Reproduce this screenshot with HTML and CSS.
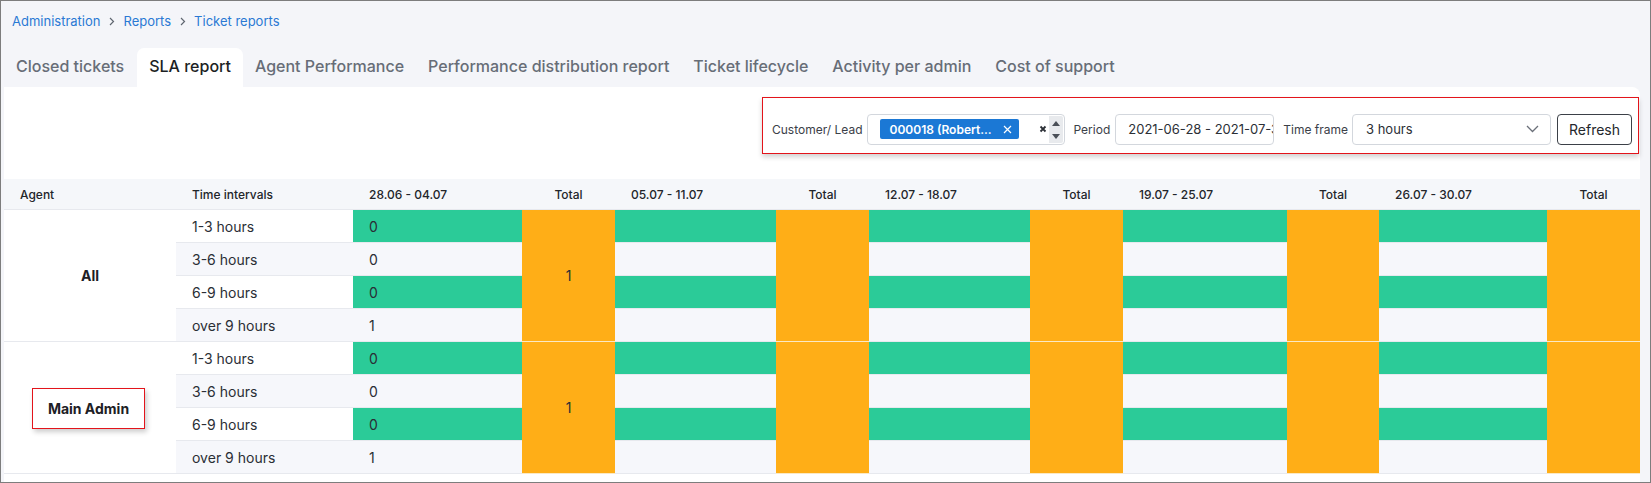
FILE: index.html
```html
<!DOCTYPE html>
<html lang="en">
<head>
<meta charset="utf-8">
<title>SLA report</title>
<link rel="stylesheet" href="styles.css">
</head>
<body>
<div class="frame">
  <nav class="crumbs">
    <a class="crumb">Administration</a>
    <svg class="sep" width="6" height="9" viewBox="0 0 6 9"><path d="M1 1l3.5 3.5L1 8" fill="none" stroke="#5f6670" stroke-width="1.2"/></svg>
    <a class="crumb">Reports</a>
    <svg class="sep" width="6" height="9" viewBox="0 0 6 9"><path d="M1 1l3.5 3.5L1 8" fill="none" stroke="#5f6670" stroke-width="1.2"/></svg>
    <a class="crumb">Ticket reports</a>
  </nav>

  <div class="tabs">
    <div class="tab">Closed tickets</div>
    <div class="tab active">SLA report</div>
    <div class="tab">Agent Performance</div>
    <div class="tab">Performance distribution report</div>
    <div class="tab">Ticket lifecycle</div>
    <div class="tab">Activity per admin</div>
    <div class="tab">Cost of support</div>
  </div>

  <div class="panel">
    <div class="filters-row">
      <div class="filters">
        <span class="flabel lbl-customer">Customer/ Lead</span>
        <div class="select multi">
          <span class="chip">000018 (Robert...
            <svg class="chip-x" width="9" height="9" viewBox="0 0 9 9"><path d="M1 1l7 7M8 1l-7 7" stroke="#fff" stroke-width="1.2"/></svg>
          </span>
          <svg class="clear-x" width="8" height="8" viewBox="0 0 8 8"><path d="M1.5 1.5l5 5M6.5 1.5l-5 5" stroke="#2b2f36" stroke-width="1.8"/></svg>
          <span class="spinner">
            <svg width="8" height="5" viewBox="0 0 8 5"><path d="M0 5L4 0L8 5Z" fill="#4a4f57"/></svg>
            <svg width="8" height="5" viewBox="0 0 8 5"><path d="M0 0L4 5L8 0Z" fill="#4a4f57"/></svg>
          </span>
        </div>
        <span class="flabel lbl-period">Period</span>
        <div class="input period"><span class="ival">2021-06-28 - 2021-07-31</span></div>
        <span class="flabel lbl-frame">Time frame</span>
        <div class="select single">
          <span class="sval">3 hours</span>
          <svg class="chev" width="13" height="8" viewBox="0 0 13 8"><path d="M1 1l5.5 5.5L12 1" fill="none" stroke="#6b7079" stroke-width="1.3"/></svg>
        </div>
        <button class="btn">Refresh</button>
      </div>
    </div>

    <table class="sla">
      <colgroup>
        <col class="c-agent"><col class="c-ti">
        <col class="c-d1"><col class="c-t">
        <col class="c-d2"><col class="c-t">
        <col class="c-d3"><col class="c-t">
        <col class="c-d4"><col class="c-t2">
        <col class="c-d5"><col class="c-t">
      </colgroup>
      <thead>
        <tr>
          <th>Agent</th><th>Time intervals</th>
          <th>28.06 - 04.07</th><th class="tc">Total</th>
          <th>05.07 - 11.07</th><th class="tc">Total</th>
          <th>12.07 - 18.07</th><th class="tc">Total</th>
          <th>19.07 - 25.07</th><th class="tc">Total</th>
          <th>26.07 - 30.07</th><th class="tc">Total</th>
        </tr>
      </thead>
      <tbody>
        <tr>
          <td class="agent" rowspan="4">All</td>
          <td class="w">1-3 hours</td>
          <td class="g">0</td><td class="o" rowspan="4">1</td>
          <td class="g"></td><td class="o" rowspan="4"></td>
          <td class="g"></td><td class="o" rowspan="4"></td>
          <td class="g"></td><td class="o" rowspan="4"></td>
          <td class="g"></td><td class="o" rowspan="4"></td>
        </tr>
        <tr>
          <td class="s">3-6 hours</td>
          <td class="s">0</td><td class="s"></td><td class="s"></td><td class="s"></td><td class="s"></td>
        </tr>
        <tr>
          <td class="w">6-9 hours</td>
          <td class="g">0</td><td class="g"></td><td class="g"></td><td class="g"></td><td class="g"></td>
        </tr>
        <tr>
          <td class="s">over 9 hours</td>
          <td class="s">1</td><td class="s"></td><td class="s"></td><td class="s"></td><td class="s"></td>
        </tr>

        <tr>
          <td class="agent" rowspan="4"><span class="mark">Main Admin</span></td>
          <td class="w">1-3 hours</td>
          <td class="g">0</td><td class="o" rowspan="4">1</td>
          <td class="g"></td><td class="o" rowspan="4"></td>
          <td class="g"></td><td class="o" rowspan="4"></td>
          <td class="g"></td><td class="o" rowspan="4"></td>
          <td class="g"></td><td class="o" rowspan="4"></td>
        </tr>
        <tr>
          <td class="s">3-6 hours</td>
          <td class="s">0</td><td class="s"></td><td class="s"></td><td class="s"></td><td class="s"></td>
        </tr>
        <tr>
          <td class="w">6-9 hours</td>
          <td class="g">0</td><td class="g"></td><td class="g"></td><td class="g"></td><td class="g"></td>
        </tr>
        <tr>
          <td class="s">over 9 hours</td>
          <td class="s">1</td><td class="s"></td><td class="s"></td><td class="s"></td><td class="s"></td>
        </tr>
      </tbody>
    </table>
  </div>
</div>
</body>
</html>
```

FILE: styles.css
```css
* { box-sizing: border-box; }

html, body {
  margin: 0;
  padding: 0;
  background: #f4f5f9;
}

.frame {
  width: 1651px;
  height: 483px;
  border: 1px solid #7d7d7d;
  background: #f4f5f9;
  overflow: hidden;
  font-family: Inter, "Noto Sans", sans-serif;
  color: #2a2e35;
  display: flex;
  flex-direction: column;
}

/* breadcrumbs */
.crumbs {
  display: flex;
  align-items: center;
  padding: 11px 0 0 11px;
  height: 29px;
  font-size: 13px;
  line-height: 18px;
}
.crumb {
  color: #2a79d4;
  text-decoration: none;
}
.sep {
  margin: 0 8px 0 9px;
}

/* tabs */
.tabs {
  display: flex;
  margin-top: 18px;
  padding-left: 3px;
  height: 39px;
}
.tab {
  padding: 0 12px 2px;
  font-size: 16px;
  font-weight: 500;
  line-height: 37px;
  color: #676d77;
  border-radius: 7px 7px 0 0;
  white-space: nowrap;
}
.tab.active {
  background: #fff;
  color: #1c1f24;
  margin-left: 1px;
}

/* panel */
.panel {
  flex: 1;
  margin: 0 10px 0 3px;
  background: #fff;
  border-radius: 0 8px 0 0;
}

.filters-row {
  display: flex;
  justify-content: flex-end;
  padding: 10px 1px 0 0;
}
.filters {
  display: flex;
  align-items: center;
  height: 57px;
  padding: 7px 6px 0 9px;
  border: 1px solid #e3141b;
  box-shadow: 0 3px 5px rgba(0, 0, 0, 0.18);
  background: #fff;
}
.flabel {
  font-size: 12px;
  color: #3b4048;
  white-space: nowrap;
}
.lbl-customer { margin-right: 4px; }
.lbl-period { margin: 0 5px 0 9px; }
.lbl-frame { margin: 0 4px 0 9px; }

.select, .input {
  height: 31px;
  border: 1px solid #d3d7dd;
  border-radius: 4px;
  background: #fff;
  display: flex;
  align-items: center;
}
.multi {
  width: 198px;
  padding-left: 12px;
}
.chip {
  display: inline-flex;
  align-items: center;
  height: 20px;
  width: 139px;
  padding-left: 10px;
  background: #1b78d5;
  color: #fff;
  border-radius: 2px;
  font-size: 12px;
  font-weight: 600;
  white-space: nowrap;
}
.chip-x {
  margin-left: 11px;
}
.clear-x {
  margin-left: 20px;
}
.spinner {
  margin-left: auto;
  width: 14px;
  height: 27px;
  margin-right: 1px;
  background: #e8eaed;
  border-radius: 0 2px 2px 0;
  display: flex;
  flex-direction: column;
  justify-content: space-between;
  align-items: center;
  padding: 5px 0 4px;
}
.period {
  width: 159px;
  padding-left: 12px;
  overflow: hidden;
}
.ival {
  font-size: 13px;
  white-space: nowrap;
  color: #2b2f36;
}
.single {
  width: 199px;
  padding: 0 11px 0 13px;
  justify-content: space-between;
}
.sval {
  font-size: 13px;
  color: #2b2f36;
}
.btn {
  margin-left: 6px;
  width: 75px;
  height: 31px;
  border: 1px solid #3b4047;
  border-radius: 4px;
  background: #fff;
  font-family: Inter, "Noto Sans", sans-serif;
  font-size: 14px;
  color: #24272c;
  padding: 0;
}

/* table */
.sla {
  margin-top: 25px;
  width: 1636px;
  table-layout: fixed;
  border-collapse: separate;
  border-spacing: 0;
}
.c-agent { width: 172px; }
.c-ti { width: 177px; }
.c-d1 { width: 169px; }
.c-d2, .c-d3 { width: 161px; }
.c-d4 { width: 164px; }
.c-d5 { width: 168px; }
.c-t { width: 93px; }
.c-t2 { width: 92px; }

.sla th {
  height: 31px;
  padding: 0 16px;
  background: #f5f7fa;
  border-bottom: 1px solid #e7e9ee;
  font-size: 12px;
  font-weight: 500;
  color: #22252a;
  text-align: left;
  white-space: nowrap;
}
.sla th.tc { text-align: center; }

.sla td {
  height: 33px;
  padding: 0 16px;
  font-size: 14px;
  color: #2a2e35;
  border-bottom: 1px solid #e7e9ee;
  white-space: nowrap;
}
.sla td.agent {
  background: #fff;
  text-align: center;
  font-weight: 700;
  color: #1d2025;
}
.sla td.w { background: #fff; }
.sla td.s { background: #f6f7fb; }
.sla td.g { background: #2bcb98; }
.sla td.o {
  background: #ffae17;
  text-align: center;
  border-bottom: 1px solid #fbe9c4;
}

.mark {
  display: inline-block;
  width: 113px;
  height: 41px;
  line-height: 39px;
  border: 1px solid #e3141b;
  box-shadow: 2px 3px 5px rgba(0, 0, 0, 0.2);
  margin-left: -3px;
  margin-top: 1px;
}
```
